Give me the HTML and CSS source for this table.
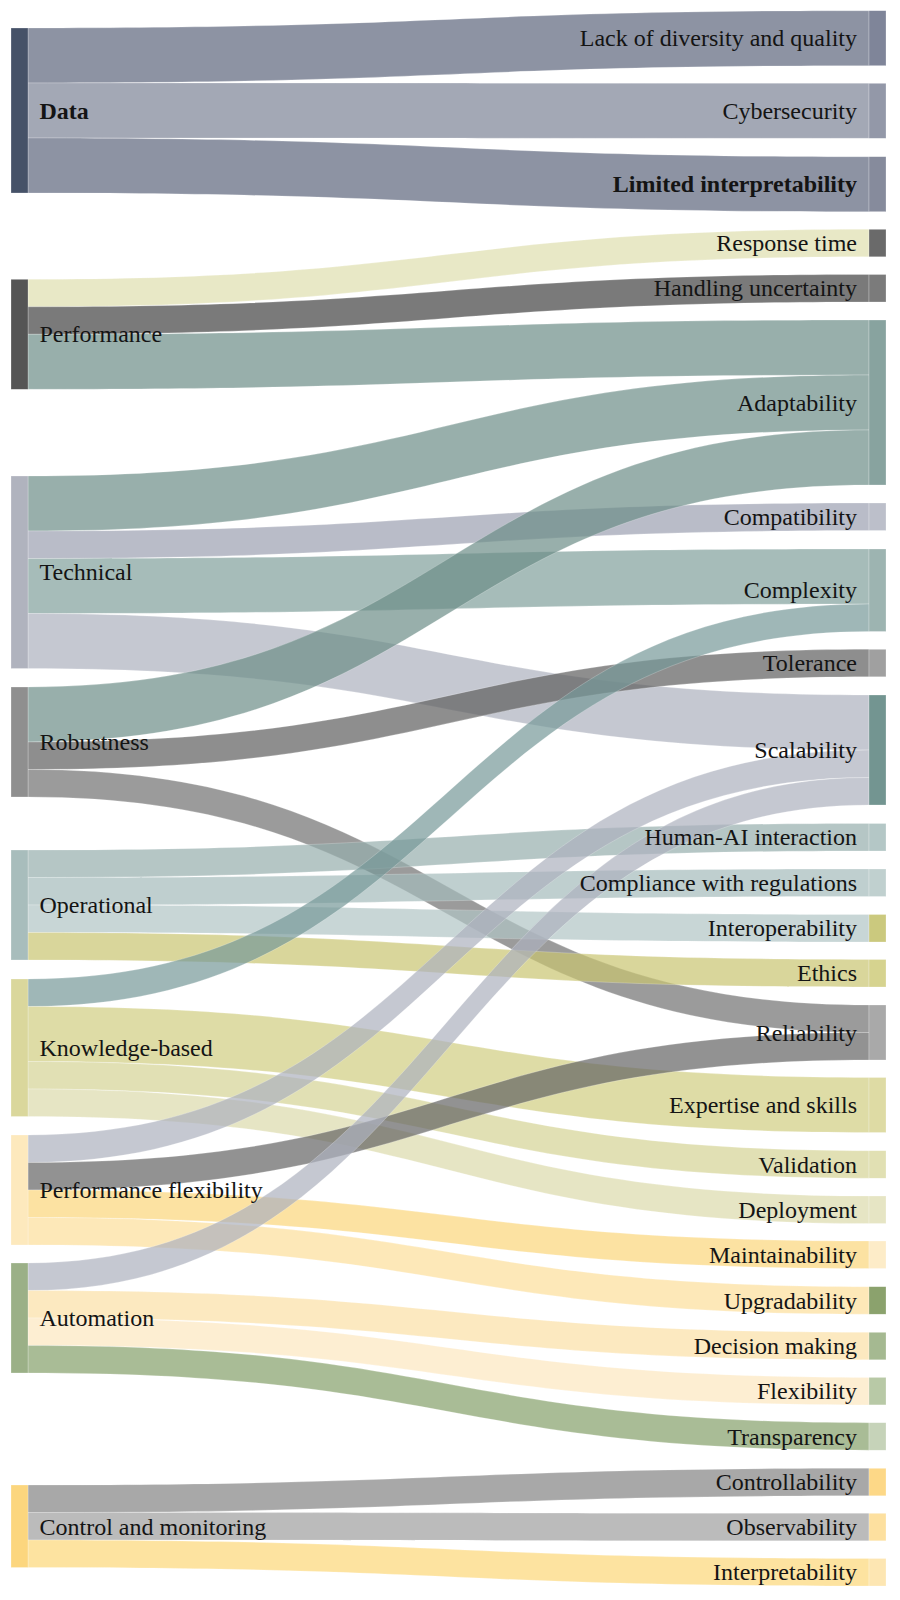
FILE: index.html
```html
<!DOCTYPE html>
<html lang="en">
<head>
<meta charset="utf-8">
<title>Sankey diagram</title>
<link rel="stylesheet" href="styles.css">
</head>
<body>
<div class="chart">
<svg class="sankey" width="900" height="1600" viewBox="0 0 900 1600" xmlns="http://www.w3.org/2000/svg">
  <g class="links">
    <path class="link l-data1" d="M28,28 C448.5,28 448.5,10.7 869,10.7 L869,65.7 C448.5,65.7 448.5,83 28,83 Z"/>
    <path class="link l-data2" d="M28,83 C448.5,83 448.5,83.3 869,83.3 L869,138.3 C448.5,138.3 448.5,138 28,138 Z"/>
    <path class="link l-data1" d="M28,138 C448.5,138 448.5,156.7 869,156.7 L869,211.7 C448.5,211.7 448.5,193 28,193 Z"/>
    <path class="link l-resp" d="M28,279.3 C448.5,279.3 448.5,229.3 869,229.3 L869,256.8 C448.5,256.8 448.5,306.8 28,306.8 Z"/>
    <path class="link l-hand" d="M28,306.8 C448.5,306.8 448.5,274.5 869,274.5 L869,302 C448.5,302 448.5,334.3 28,334.3 Z"/>
    <path class="link l-adapt" d="M28,334.3 C448.5,334.3 448.5,320 869,320 L869,375 C448.5,375 448.5,389.3 28,389.3 Z"/>
    <path class="link l-adapt" d="M28,476 C448.5,476 448.5,375 869,375 L869,430 C448.5,430 448.5,531 28,531 Z"/>
    <path class="link l-compat" d="M28,531 C448.5,531 448.5,503 869,503 L869,530.5 C448.5,530.5 448.5,558.5 28,558.5 Z"/>
    <path class="link l-complex" d="M28,558.5 C448.5,558.5 448.5,549 869,549 L869,604 C448.5,604 448.5,613.5 28,613.5 Z"/>
    <path class="link l-scal" d="M28,613.5 C448.5,613.5 448.5,695 869,695 L869,750 C448.5,750 448.5,668.5 28,668.5 Z"/>
    <path class="link l-adapt" d="M28,687 C448.5,687 448.5,430 869,430 L869,485 C448.5,485 448.5,742 28,742 Z"/>
    <path class="link l-tol" d="M28,742 C448.5,742 448.5,649.3 869,649.3 L869,676.8 C448.5,676.8 448.5,769.5 28,769.5 Z"/>
    <path class="link l-rel" d="M28,769.5 C448.5,769.5 448.5,1005 869,1005 L869,1032.5 C448.5,1032.5 448.5,797 28,797 Z"/>
    <path class="link l-hai" d="M28,850 C448.5,850 448.5,823.5 869,823.5 L869,851 C448.5,851 448.5,877.5 28,877.5 Z"/>
    <path class="link l-comp" d="M28,877.5 C448.5,877.5 448.5,869 869,869 L869,896.5 C448.5,896.5 448.5,905 28,905 Z"/>
    <path class="link l-interop" d="M28,905 C448.5,905 448.5,914.5 869,914.5 L869,942 C448.5,942 448.5,932.5 28,932.5 Z"/>
    <path class="link l-ethics" d="M28,932.5 C448.5,932.5 448.5,959.5 869,959.5 L869,987 C448.5,987 448.5,960 28,960 Z"/>
    <path class="link l-kcomplex" d="M28,979 C448.5,979 448.5,604 869,604 L869,631.5 C448.5,631.5 448.5,1006.5 28,1006.5 Z"/>
    <path class="link l-exp" d="M28,1006.5 C448.5,1006.5 448.5,1077.5 869,1077.5 L869,1132.5 C448.5,1132.5 448.5,1061.5 28,1061.5 Z"/>
    <path class="link l-val" d="M28,1061.5 C448.5,1061.5 448.5,1150.7 869,1150.7 L869,1178.2 C448.5,1178.2 448.5,1089 28,1089 Z"/>
    <path class="link l-dep" d="M28,1089 C448.5,1089 448.5,1196 869,1196 L869,1223.5 C448.5,1223.5 448.5,1116.5 28,1116.5 Z"/>
    <path class="link l-scal" d="M28,1135 C448.5,1135 448.5,750 869,750 L869,777.5 C448.5,777.5 448.5,1162.5 28,1162.5 Z"/>
    <path class="link l-rel2" d="M28,1162.5 C448.5,1162.5 448.5,1032.5 869,1032.5 L869,1060 C448.5,1060 448.5,1190 28,1190 Z"/>
    <path class="link l-maint" d="M28,1190 C448.5,1190 448.5,1241 869,1241 L869,1268.5 C448.5,1268.5 448.5,1217.5 28,1217.5 Z"/>
    <path class="link l-upg" d="M28,1217.5 C448.5,1217.5 448.5,1286.7 869,1286.7 L869,1314.2 C448.5,1314.2 448.5,1245 28,1245 Z"/>
    <path class="link l-scal" d="M28,1263 C448.5,1263 448.5,777.5 869,777.5 L869,805 C448.5,805 448.5,1290.5 28,1290.5 Z"/>
    <path class="link l-dec" d="M28,1290.5 C448.5,1290.5 448.5,1332.3 869,1332.3 L869,1359.8 C448.5,1359.8 448.5,1318 28,1318 Z"/>
    <path class="link l-flex" d="M28,1318 C448.5,1318 448.5,1377.4 869,1377.4 L869,1404.9 C448.5,1404.9 448.5,1345.5 28,1345.5 Z"/>
    <path class="link l-transp" d="M28,1345.5 C448.5,1345.5 448.5,1422.7 869,1422.7 L869,1450.2 C448.5,1450.2 448.5,1373 28,1373 Z"/>
    <path class="link l-ctrl" d="M28,1485 C448.5,1485 448.5,1468.3 869,1468.3 L869,1495.8 C448.5,1495.8 448.5,1512.5 28,1512.5 Z"/>
    <path class="link l-obs" d="M28,1512.5 C448.5,1512.5 448.5,1513.3 869,1513.3 L869,1540.8 C448.5,1540.8 448.5,1540 28,1540 Z"/>
    <path class="link l-interp" d="M28,1540 C448.5,1540 448.5,1558.5 869,1558.5 L869,1586 C448.5,1586 448.5,1567.5 28,1567.5 Z"/>
  </g>
  <g class="nodes">
    <rect class="node n-data" x="11" y="28" width="17" height="165"/>
    <rect class="node n-perf" x="11" y="279.3" width="17" height="110"/>
    <rect class="node n-tech" x="11" y="476" width="17" height="192.5"/>
    <rect class="node n-rob" x="11" y="687" width="17" height="110"/>
    <rect class="node n-op" x="11" y="850" width="17" height="110"/>
    <rect class="node n-know" x="11" y="979" width="17" height="137.5"/>
    <rect class="node n-pf" x="11" y="1135" width="17" height="110"/>
    <rect class="node n-auto" x="11" y="1263" width="17" height="110"/>
    <rect class="node n-ctrl" x="11" y="1485" width="17" height="82.5"/>

    <rect class="node r-lack" x="869" y="10.7" width="17" height="55"/>
    <rect class="node r-cyber" x="869" y="83.3" width="17" height="55"/>
    <rect class="node r-limited" x="869" y="156.7" width="17" height="55"/>
    <rect class="node r-resp" x="869" y="229.3" width="17" height="27.5"/>
    <rect class="node r-hand" x="869" y="274.5" width="17" height="27.5"/>
    <rect class="node r-adapt" x="869" y="320" width="17" height="165"/>
    <rect class="node r-compat" x="869" y="503" width="17" height="27.5"/>
    <rect class="node r-complex" x="869" y="549" width="17" height="82.5"/>
    <rect class="node r-tol" x="869" y="649.3" width="17" height="27.5"/>
    <rect class="node r-scal" x="869" y="695" width="17" height="110"/>
    <rect class="node r-hai" x="869" y="823.5" width="17" height="27.5"/>
    <rect class="node r-comp" x="869" y="869" width="17" height="27.5"/>
    <rect class="node r-interop" x="869" y="914.5" width="17" height="27.5"/>
    <rect class="node r-ethics" x="869" y="959.5" width="17" height="27.5"/>
    <rect class="node r-rel" x="869" y="1005" width="17" height="55"/>
    <rect class="node r-exp" x="869" y="1077.5" width="17" height="55"/>
    <rect class="node r-val" x="869" y="1150.7" width="17" height="27.5"/>
    <rect class="node r-dep" x="869" y="1196" width="17" height="27.5"/>
    <rect class="node r-maint" x="869" y="1241" width="17" height="27.5"/>
    <rect class="node r-upg" x="869" y="1286.7" width="17" height="27.5"/>
    <rect class="node r-dec" x="869" y="1332.3" width="17" height="27.5"/>
    <rect class="node r-flex" x="869" y="1377.4" width="17" height="27.5"/>
    <rect class="node r-transp" x="869" y="1422.7" width="17" height="27.5"/>
    <rect class="node r-ctrl" x="869" y="1468.3" width="17" height="27.5"/>
    <rect class="node r-obs" x="869" y="1513.3" width="17" height="27.5"/>
    <rect class="node r-interp" x="869" y="1558.5" width="17" height="27.5"/>
  </g>
  <g class="labels-left">
    <text class="label label-left label-bold" x="39.5" y="118.5">Data</text>
    <text class="label label-left" x="39.5" y="342.3">Performance</text>
    <text class="label label-left" x="39.5" y="580">Technical</text>
    <text class="label label-left" x="39.5" y="750">Robustness</text>
    <text class="label label-left" x="39.5" y="913">Operational</text>
    <text class="label label-left" x="39.5" y="1056">Knowledge-based</text>
    <text class="label label-left" x="39.5" y="1198">Performance flexibility</text>
    <text class="label label-left" x="39.5" y="1326">Automation</text>
    <text class="label label-left" x="39.5" y="1534.5">Control and monitoring</text>
  </g>
  <g class="labels-right">
    <text class="label label-right" x="857" y="46.2">Lack of diversity and quality</text>
    <text class="label label-right" x="857" y="118.8">Cybersecurity</text>
    <text class="label label-right label-bold" x="857" y="192">Limited interpretability</text>
    <text class="label label-right" x="857" y="251">Response time</text>
    <text class="label label-right" x="857" y="296.3">Handling uncertainty</text>
    <text class="label label-right" x="857" y="410.5">Adaptability</text>
    <text class="label label-right" x="857" y="524.8">Compatibility</text>
    <text class="label label-right" x="857" y="598.3">Complexity</text>
    <text class="label label-right" x="857" y="671">Tolerance</text>
    <text class="label label-right" x="857" y="758">Scalability</text>
    <text class="label label-right" x="857" y="845.3">Human-AI interaction</text>
    <text class="label label-right" x="857" y="890.8">Compliance with regulations</text>
    <text class="label label-right" x="857" y="936.3">Interoperability</text>
    <text class="label label-right" x="857" y="981.3">Ethics</text>
    <text class="label label-right" x="857" y="1040.5">Reliability</text>
    <text class="label label-right" x="857" y="1113">Expertise and skills</text>
    <text class="label label-right" x="857" y="1172.5">Validation</text>
    <text class="label label-right" x="857" y="1217.8">Deployment</text>
    <text class="label label-right" x="857" y="1262.8">Maintainability</text>
    <text class="label label-right" x="857" y="1308.5">Upgradability</text>
    <text class="label label-right" x="857" y="1354">Decision making</text>
    <text class="label label-right" x="857" y="1399.2">Flexibility</text>
    <text class="label label-right" x="857" y="1444.5">Transparency</text>
    <text class="label label-right" x="857" y="1490">Controllability</text>
    <text class="label label-right" x="857" y="1535">Observability</text>
    <text class="label label-right" x="857" y="1580.3">Interpretability</text>
  </g>
</svg>
</div>
</body>
</html>
```

FILE: styles.css
```css
html, body {
  margin: 0;
  padding: 0;
  background: #ffffff;
}

.chart {
  width: 900px;
  height: 1600px;
}

.sankey {
  display: block;
}

.link {
  stroke: rgba(255, 255, 255, 0.45);
  stroke-width: 0.5;
}

.l-data1 { fill: rgba(92, 101, 124, 0.7); }
.l-data2 { fill: rgba(124, 131, 149, 0.7); }
.l-resp { fill: rgba(222, 222, 174, 0.7); }
.l-hand { fill: rgba(65, 65, 65, 0.7); }
.l-adapt { fill: rgba(108, 141, 136, 0.7); }
.l-compat { fill: rgba(155, 159, 176, 0.7); }
.l-complex { fill: rgba(128, 159, 155, 0.7); }
.l-scal { fill: rgba(172, 176, 189, 0.7); }
.l-tol { fill: rgba(94, 94, 94, 0.7); }
.l-rel { fill: rgba(112, 112, 112, 0.7); }
.l-rel2 { fill: rgba(100, 100, 100, 0.7); }
.l-hai { fill: rgba(149, 174, 172, 0.7); }
.l-comp { fill: rgba(164, 186, 186, 0.7); }
.l-interop { fill: rgba(176, 196, 196, 0.7); }
.l-ethics { fill: rgba(201, 196, 112, 0.7); }
.l-kcomplex { fill: rgba(118, 152, 152, 0.7); }
.l-exp { fill: rgba(208, 205, 128, 0.7); }
.l-val { fill: rgba(212, 211, 148, 0.7); }
.l-dep { fill: rgba(219, 218, 171, 0.7); }
.l-maint { fill: rgba(251, 214, 122, 0.7); }
.l-upg { fill: rgba(252, 222, 154, 0.7); }
.l-dec { fill: rgba(251, 224, 165, 0.7); }
.l-flex { fill: rgba(252, 231, 191, 0.7); }
.l-transp { fill: rgba(132, 159, 105, 0.7); }
.l-ctrl { fill: rgba(131, 131, 131, 0.7); }
.l-obs { fill: rgba(158, 158, 158, 0.7); }
.l-interp { fill: rgba(252, 215, 119, 0.7); }

.node {
  stroke: rgba(255, 255, 255, 0.5);
  stroke-width: 0.5;
}

.n-data { fill: #465268; }
.n-perf { fill: #555555; }
.n-tech { fill: #b0b3be; }
.n-rob { fill: #8f8f8f; }
.n-op { fill: #a8bdbc; }
.n-know { fill: #dad79c; }
.n-pf { fill: #fde9bd; }
.n-auto { fill: #9bb087; }
.n-ctrl { fill: #fcd67e; }

.r-lack { fill: #7f8599; }
.r-cyber { fill: #9398a8; }
.r-limited { fill: #868b9c; }
.r-resp { fill: #6a6a6a; }
.r-hand { fill: #7b7b7b; }
.r-adapt { fill: #88a39f; }
.r-compat { fill: #bcbfca; }
.r-complex { fill: #9db4b1; }
.r-tol { fill: #a0a0a0; }
.r-scal { fill: #739591; }
.r-hai { fill: #b4c7c6; }
.r-comp { fill: #c0d0cf; }
.r-interop { fill: #cbc97e; }
.r-ethics { fill: #d6d38f; }
.r-rel { fill: #a9a9a9; }
.r-exp { fill: #dedba4; }
.r-val { fill: #e1e0b3; }
.r-dep { fill: #e6e5c4; }
.r-maint { fill: #fdecc8; }
.r-upg { fill: #8ba26d; }
.r-dec { fill: #a5b991; }
.r-flex { fill: #b8c9a6; }
.r-transp { fill: #c6d3b9; }
.r-ctrl { fill: #fdd887; }
.r-obs { fill: #fde09f; }
.r-interp { fill: #fde6b2; }

.label {
  font-family: "Liberation Serif", "Times New Roman", serif;
  font-size: 24px;
  fill: #141414;
}

.label-left {
  text-anchor: start;
}

.label-right {
  text-anchor: end;
}

.label-bold {
  font-weight: bold;
}
```
